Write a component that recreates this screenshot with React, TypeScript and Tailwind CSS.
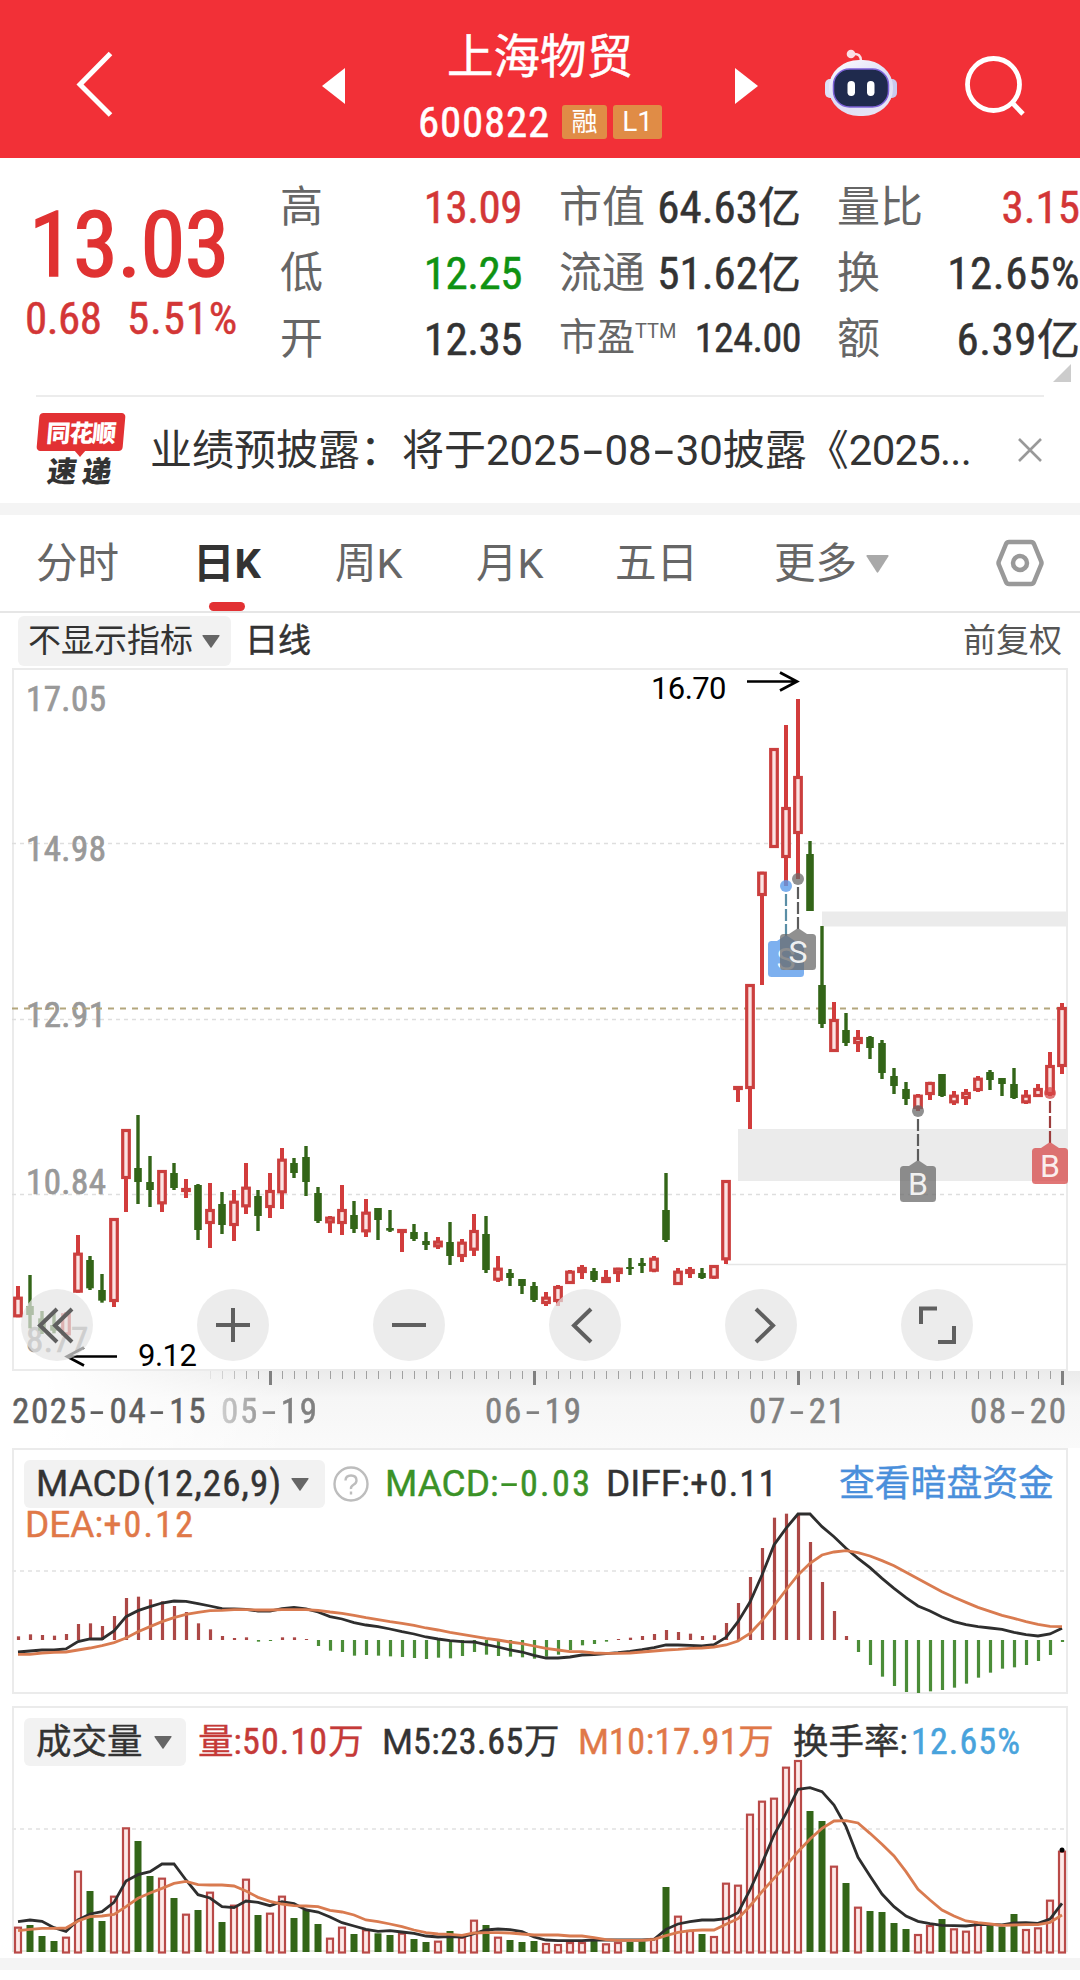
import type { ReactNode } from 'react'

type Leg = { base: number; bars: number[][] }

const STEP = 12
const x = (i: number) => 18 + i * STEP

// every bar: high, body top, body bottom, low, up(1)/down(0), in thirds of a pixel below base
const legs: Leg[] = [
  {
    base: 1080,
    bars: [
      [618, 650, 712, 712, 1], [585, 678, 705, 745, 0], [693, 715, 752, 762, 0], [700, 735, 752, 760, 0],
      [697, 700, 766, 775, 1], [465, 518, 638, 638, 1], [528, 540, 625, 630, 0], [582, 630, 662, 668, 0],
      [414, 414, 666, 681, 1], [147, 147, 297, 396, 1], [105, 264, 306, 372, 0], [228, 306, 330, 381, 0],
      [270, 270, 373, 396, 1], [249, 279, 324, 330, 0], [297, 324, 336, 354, 1], [312, 315, 450, 480, 0],
      [309, 387, 432, 504, 1], [336, 372, 435, 462, 0], [330, 362, 438, 483, 1], [249, 320, 382, 402, 1],
      [330, 348, 408, 453, 0], [279, 330, 384, 414, 1], [204, 236, 340, 387, 1], [234, 249, 279, 294, 0],
      [198, 231, 306, 348, 0], [321, 339, 423, 429, 0], [408, 410, 430, 459, 1], [315, 387, 432, 465, 1],
      [363, 405, 447, 459, 0], [357, 395, 457, 471, 1], [384, 384, 420, 480, 0], [390, 444, 452, 456, 0],
      [447, 447, 459, 516, 1], [432, 456, 477, 483, 0], [456, 483, 495, 510, 0], [471, 482, 502, 507, 1],
      [426, 486, 528, 555, 0], [477, 485, 531, 546, 1], [402, 450, 512, 528, 1], [408, 462, 570, 579, 0],
      [528, 563, 602, 606, 1], [567, 579, 594, 618, 0], [597, 597, 618, 642, 0], [606, 618, 660, 666, 0],
      [636, 650, 672, 678, 1], [615, 618, 666, 678, 1], [570, 572, 612, 612, 1], [555, 561, 579, 597, 1],
      [564, 573, 600, 606, 0], [570, 591, 609, 609, 1], [563, 563, 582, 606, 1], [534, 561, 567, 585, 0],
      [534, 549, 558, 579, 0], [528, 533, 575, 577, 1], [279, 390, 480, 486, 0], [564, 572, 615, 615, 1],
      [561, 567, 582, 594, 1], [564, 579, 594, 597, 0], [555, 555, 596, 597, 1], [300, 300, 541, 552, 1],
      [18, 18, 30, 66, 1], [-288, -288, 27, 147, 1],
    ],
  },
  {
    base: 660,
    bars: [
      [635, 635, 708, 975, 1], [264, 264, 564, 564, 1], [195, 441, 594, 678, 1],
      [117, 348, 522, 657, 1], [543, 582, 753, 753, 0], [798, 975, 1092, 1104, 0],
    ],
  },
  {
    base: 960,
    bars: [
      [126, 177, 276, 276, 1], [159, 210, 249, 258, 0], [210, 231, 252, 276, 1], [228, 231, 264, 297, 0],
      [240, 249, 339, 357, 0], [324, 348, 378, 402, 0], [366, 387, 417, 435, 0], [402, 404, 447, 453, 1],
      [365, 366, 405, 420, 1], [342, 342, 408, 411, 0], [393, 404, 430, 435, 1], [387, 396, 417, 435, 1],
      [348, 353, 393, 396, 1], [330, 336, 360, 390, 0], [354, 354, 372, 408, 0], [324, 372, 414, 417, 0],
      [390, 404, 430, 432, 1], [372, 384, 411, 411, 1], [276, 315, 405, 408, 1], [129, 141, 321, 342, 1],
    ],
  },
]

const candles = legs.flatMap(l =>
  l.bars.map(([h, t, b, lo, up]) => ({
    high: l.base + h / 3,
    top: l.base + t / 3,
    bottom: l.base + b / 3,
    low: l.base + lo / 3,
    up: up === 1,
  }))
)

const macd = [
  589, 583, 585, 587, 582, 552, 550, 558, 528, 474, 470, 478, 484, 498, 516, 550, 568, 588, 594, 592, 605, 603,
  592, 592, 597, 618, 632, 636, 647, 645, 647, 649, 651, 654, 657, 653, 655, 648, 636, 644, 648, 650, 652, 656,
  650, 644, 630, 616, 612, 605, 597, 593, 588, 582, 570, 576, 581, 588, 586, 549, 489, 411, 324, 233, 221, 225,
  306, 426, 513, 588, 636, 675, 710, 738, 756, 759, 754, 750, 743, 731, 713, 698, 686, 682, 675, 663, 645, 606,
]

const diff = [
  636, 633, 630, 630, 627, 605, 597, 597, 573, 530, 512, 500, 489, 483, 484, 491, 498, 506, 507, 508, 513, 513,
  506, 502, 507, 516, 530, 537, 548, 555, 560, 567, 575, 582, 591, 597, 602, 605, 606, 614, 621, 630, 636, 646,
  654, 654, 651, 645, 644, 641, 638, 634, 629, 623, 615, 615, 616, 618, 614, 592, 545, 486, 405, 315, 265, 222,
  222, 260, 290, 325, 355, 383, 415, 445, 473, 498, 513, 531, 545, 554, 560, 564, 568, 577, 584, 588, 582, 565,
]

const dea = [
  643, 643, 639, 637, 636, 630, 624, 617, 608, 594, 575, 560, 545, 533, 523, 517, 512, 511, 509, 509, 510, 510,
  509, 509, 509, 511, 516, 520, 526, 533, 539, 545, 550, 556, 564, 570, 577, 583, 589, 595, 600, 606, 611, 618,
  625, 630, 635, 635, 639, 640, 640, 639, 636, 633, 630, 628, 625, 624, 621, 615, 603, 580, 542, 497, 450, 405,
  370, 345, 336, 332, 338, 348, 362, 377, 397, 416, 436, 455, 472, 487, 502, 514, 526, 535, 545, 553, 559, 560,
]

// r = up, g = down, ten days a group
const volumeSides = [
  'rgggrrggrr', 'ggrgrgrgrr', 'grrgggrrgr', 'ggrggrgrrg', 'rgggrrrrgr', 'rggrgrrgrr', 'rrrrrrggrg', 'rggggrrgrr', 'rgggrrrr',
].join('')
const volume = [
  680, 675, 708, 723, 710, 512, 573, 663, 587, 382, 423, 528, 533, 594, 641, 630, 575, 666, 614, 536, 645, 638,
  587, 654, 630, 672, 713, 680, 702, 688, 700, 705, 698, 717, 726, 722, 693, 710, 659, 675, 710, 720, 726, 723,
  729, 732, 726, 726, 720, 730, 726, 726, 724, 714, 561, 647, 690, 702, 708, 548, 554, 341, 302, 293, 200, 180,
  333, 363, 497, 549, 620, 633, 636, 669, 687, 702, 675, 657, 685, 692, 668, 675, 680, 642, 687, 682, 599, 452,
]

const m5 = [
  665, 660, 664, 683, 694, 660, 642, 635, 607, 543, 524, 515, 492, 492, 540, 584, 594, 620, 623, 603, 607, 617,
  605, 611, 630, 636, 651, 668, 678, 688, 694, 692, 696, 700, 708, 711, 710, 711, 701, 690, 687, 689, 695, 711,
  720, 722, 722, 722, 720, 720, 720, 720, 720, 718, 688, 672, 665, 660, 660, 656, 638, 570, 490, 405, 340, 268,
  263, 275, 315, 380, 472, 528, 582, 620, 648, 664, 671, 676, 677, 678, 674, 673, 675, 669, 668, 670, 657, 610,
]

const m10 = [
  692, 688, 685, 685, 684, 663, 650, 648, 643, 620, 595, 579, 565, 550, 544, 554, 555, 555, 558, 573, 592, 604,
  612, 617, 618, 620, 631, 636, 645, 660, 665, 672, 680, 690, 698, 702, 703, 706, 699, 698, 698, 699, 702, 705,
  705, 705, 708, 708, 713, 719, 721, 721, 721, 718, 707, 697, 692, 690, 690, 673, 656, 618, 575, 535, 497, 455,
  417, 385, 363, 362, 369, 400, 433, 468, 515, 568, 600, 630, 648, 663, 668, 672, 676, 675, 674, 674, 667, 645,
]

const points = (ys: number[], base: number) => ys.map((y, i) => `${x(i)},${base + y / 3}`).join(' ')

const Num = ({ children, className = '' }: { children: ReactNode; className?: string }) => (
  <span
    className={`font-['Roboto_Condensed','Noto_Sans_CJK_SC',sans-serif] [-webkit-text-stroke:0.5px_currentColor] ${className}`}
  >
    {children}
  </span>
)

// hyphen stretched to the width of a digit
const Dash = ({ className = 'w-[22px]' }: { className?: string }) => (
  <span className={`inline-block text-center ${className}`}>
    <span className="inline-block scale-x-[1.7] [-webkit-text-stroke:0.2px]">-</span>
  </span>
)

const DateText = ({ value, className = '' }: { value: string; className?: string }) => (
  <Num className={`text-[35px] tracking-[1.6px] ${className}`}>
    {value.split('-').map((part, i) => (
      <span key={i}>
        {i > 0 && <Dash />}
        {part}
      </span>
    ))}
  </Num>
)

const Caret = ({ className = 'h-[13px] w-[18px] text-[#666]' }: { className?: string }) => (
  <svg viewBox="0 0 18 13" preserveAspectRatio="none" className={className} fill="currentColor">
    <path d="M1 0h16q1 0 .5 1L9.7 12.3q-.7 1-1.4 0L.5 1Q0 0 1 0z" />
  </svg>
)

function Header() {
  return (
    <header className="flex h-[158px] bg-[#f23037] text-white">
      <div className="flex w-[322px] items-center pl-[76px] pt-[9px]">
        <svg viewBox="0 0 37 66" className="h-[66px] w-[37px]" fill="none" stroke="currentColor" strokeWidth="5">
          <path d="M34.500 2.500L4 33.500L34.500 64" />
        </svg>
      </div>
      <div className="flex w-[23px] items-center pt-[14px]">
        <svg viewBox="0 0 23 36" className="h-[36px] w-[23px]" fill="currentColor">
          <path d="M23 0v36L0 18z" />
        </svg>
      </div>
      <div className="flex w-[390px] flex-col items-center">
        <div className="mt-[26px] h-[62px] text-[46.500px] leading-[62px] [-webkit-text-stroke:0.5px_currentColor]">上海物贸</div>
        <div className="mt-[11px] flex items-center">
          <Num className="mr-[12px] text-[43px] leading-[46px] tracking-[0.8px]">600822</Num>
          <span className="mr-[6px] flex h-[34px] w-[45px] items-center justify-center rounded-[3px] bg-[#e08c46] text-[26px] leading-none">
            融
          </span>
          <span className="flex h-[34px] w-[49px] items-center justify-center rounded-[3px] bg-[#e08c46] text-[28px] leading-none">
            L1
          </span>
        </div>
      </div>
      <div className="flex w-[90px] items-center pt-[14px]">
        <svg viewBox="0 0 23 36" className="h-[36px] w-[23px]" fill="currentColor">
          <path d="M0 0v36L23 18z" />
        </svg>
      </div>
      <div className="flex w-[140px] items-center pt-[8px]">
        <svg viewBox="0 0 72 68" className="h-[68px] w-[72px]">
          <defs>
            <linearGradient id="shell" x1="0" y1="0" x2="0.6" y2="1">
              <stop offset="0" stopColor="#ffffff" />
              <stop offset="0.6" stopColor="#dcdcf6" />
              <stop offset="1" stopColor="#e6e4f5" />
            </linearGradient>
          </defs>
          <path d="M28 5Q36 4 36 12" fill="none" stroke="#fbdfe6" strokeWidth="2.500" />
          <circle cx="26" cy="5" r="4.300" fill="#fbdfe6" />
          <rect x="0" y="30" width="12" height="19" rx="5" fill="#dfe0f6" />
          <rect x="60" y="30" width="12" height="19" rx="5" fill="#c9c9ee" />
          <rect x="4" y="11" width="64" height="56" rx="30" ry="27" fill="url(#shell)" />
          <rect x="8.500" y="20" width="55" height="38" rx="16" fill="#1f2a4d" stroke="#7d62d8" strokeWidth="1.500" />
          <rect x="22.500" y="32" width="7.500" height="15" rx="3.700" fill="#fff" />
          <rect x="42" y="32" width="7.500" height="15" rx="3.700" fill="#fff" />
        </svg>
      </div>
      <div className="flex items-center pt-[14px]">
        <svg viewBox="0 0 60 60" className="h-[60px] w-[60px]" fill="none" stroke="currentColor" strokeWidth="4.800">
          <circle cx="28.500" cy="28.500" r="26" />
          <path d="M47 46.500L58 58" />
        </svg>
      </div>
    </header>
  )
}

const Stat = ({ label, value, tone = 'text-[#333]' }: { label: ReactNode; value: ReactNode; tone?: string }) => (
  <div className="flex h-[66px] items-center justify-between whitespace-nowrap text-[43px] leading-[66px] text-[#666]">
    <span>{label}</span>
    <Num className={`pt-[2px] text-[45px] tracking-[-0.500px] ${tone}`}>{value}</Num>
  </div>
)

const Yi = () => <span className="text-[43px] tracking-normal">亿</span>

function Quote() {
  return (
    <section className="relative flex h-[237px] pt-[16px]">
      <div className="w-[280px] shrink-0 pl-[25px] text-[#e03232]">
        <Num className="mt-[16px] ml-[4px] block h-[110px] text-[91px] leading-[110px] tracking-[-0.800px] [-webkit-text-stroke:1.5px_currentColor]">
          13.03
        </Num>
        <div className="flex h-[38px] items-center text-[45px] leading-[38px] text-[#d33636]">
          <Num className="w-[102px] tracking-[-0.500px]">0.68</Num>
          <Num className="tracking-[0.800px]">5.51%</Num>
        </div>
      </div>
      <div className="w-[242px] shrink-0">
        <Stat label="高" value="13.09" tone="text-[#d33636]" />
        <Stat label="低" value="12.25" tone="text-[#0f9212]" />
        <Stat label="开" value="12.35" />
      </div>
      <div className="ml-[37px] w-[242px] shrink-0">
        <Stat label="市值" value={<span className="tracking-normal">64.63<Yi /></span>} />
        <Stat label="流通" value={<span className="tracking-normal">51.62<Yi /></span>} />
        <Stat
          label={<span className="text-[38px]">市盈<span className="relative -top-[12px] text-[20px]">TTM</span></span>}
          value={<span className="relative -top-[2px] text-[40px]">124.00</span>}
        />
      </div>
      <div className="ml-[36px] w-[243px] shrink-0">
        <Stat label="量比" value={<span className="tracking-normal">3.15</span>} tone="text-[#d33636]" />
        <Stat label="换" value={<span className="tracking-[0.600px]">12.65%</span>} />
        <Stat label="额" value={<span className="tracking-[0.500px]">6.39<Yi /></span>} />
      </div>
      <svg viewBox="0 0 18 18" className="absolute right-[9px] bottom-[13px] h-[18px] w-[18px]" fill="#ccc">
        <path d="M18 0v18H0z" />
      </svg>
    </section>
  )
}

function News() {
  return (
    <section className="mx-[36px] flex h-[108px] items-center border-t-2 border-[#ececec]">
      <div className="relative w-[90px] shrink-0 font-['Noto_Sans_CJK_SC',sans-serif] font-black">
        <div className="ml-[2px] flex h-[38px] w-[86px] -skew-x-[5deg] items-center justify-center rounded-[4px] bg-[#e23133] text-[24px] leading-none tracking-[-1px] text-white">
          同花顺
        </div>
        <svg viewBox="0 0 12 7" className="absolute top-[37px] left-[38px] h-[7px] w-[12px]" fill="#e23133">
          <path d="M0 0h12L6 7z" />
        </svg>
        <div className="flex h-[36px] -skew-x-[8deg] items-end gap-[6px] pb-[3px] pl-[12px] text-[29px] leading-[30px] text-[#333]">
          <span>速</span>
          <span>递</span>
        </div>
      </div>
      <div className="ml-[24px] w-[868px] pt-[2px] text-[42px] leading-[60px] whitespace-nowrap text-[#333]">
        业绩预披露：将于2025<Dash className="w-[24px]" />08<Dash className="w-[24px]" />30披露《<span className="tracking-[-0.800px]">2025...</span>
      </div>
      <svg viewBox="0 0 24 24" className="h-[24px] w-[24px] shrink-0" stroke="#999" strokeWidth="2.600">
        <path d="M1 1L23 23M23 1L1 23" />
      </svg>
    </section>
  )
}

const tabs = [
  { name: '分时', width: 'w-[157px]' },
  { name: '日K', width: 'w-[142px]', active: true },
  { name: '周K', width: 'w-[141px]' },
  { name: '月K', width: 'w-[139px]' },
  { name: '五日', width: 'w-[159px]' },
]

function Tabs() {
  return (
    <nav className="flex h-[98px] items-center border-b-2 border-[#e6e6e6] pl-[36px] text-[41.500px] leading-[60px] text-[#666]">
      {tabs.map(t => (
        <div key={t.name} className={`relative h-[60px] pt-px ${t.width}`}>
          <span className={t.active ? 'font-bold text-[#333]' : ''}>{t.name}</span>
          {t.active && <div className="absolute top-[69px] left-[16px] h-[9px] w-[36px] rounded-[5px] bg-[#e23133]" />}
        </div>
      ))}
      <div className="flex w-[222px] items-center pt-px">
        更多
        <Caret className="ml-[9px] h-[18px] w-[23px] text-[#a9a9a9]" />
      </div>
      <svg viewBox="0 0 48 48" className="h-[48px] w-[48px]" fill="none" stroke="#999" strokeWidth="4.500">
        <path d="M13 3h22q2 0 3 2l7 17q1 2 0 4l-7 17q-1 2-3 2H13q-2 0-3-2L3 26q-1-2 0-4L10 5q1-2 3-2z" strokeLinejoin="round" />
        <circle cx="24" cy="24" r="7" />
      </svg>
    </nav>
  )
}

const tools = [
  'M36 20L19 36.500l17 16.500M51 20L34 36.500l17 16.500',
  'M19 36h34M36 19v34',
  'M19 36h34',
  'M42 20L25 36.500l17 16.500',
  'M31 20l17 16.500L31 53',
  'M20 35V19.500h16M37 53h16V37',
]

function Toolbar() {
  return (
    <div className="absolute top-[621px] left-[9px] flex gap-[104px]">
      {tools.map(d => (
        <button key={d} className="h-[72px] w-[72px] rounded-full bg-[#e4e4e4]/70">
          <svg viewBox="0 0 72 72" fill="none" stroke="#5f5f5f" strokeWidth="4">
            <path d={d} />
          </svg>
        </button>
      ))}
    </div>
  )
}

type MarkProps = { cx: number; dot: number; box: number; text: string; fill: string; line: string }

const Mark = ({ cx, dot, box, text, fill, line }: MarkProps) => (
  <g>
    <circle cx={cx} cy={dot} r="6" fill={fill} />
    <path d={`M${cx} ${dot + 8}V${box - 5}`} stroke={line} strokeWidth="2.200" strokeDasharray="12 3" />
    <path d={`M${cx - 9} ${box}L${cx} ${box - 6}L${cx + 9} ${box}z`} fill={fill} />
    <rect x={cx - 18} y={box} width="36" height="36" rx="3.500" fill={fill} />
    <text x={cx} y={box + 29} fontSize="32" textAnchor="middle" fill="#fff" fillOpacity="0.9">
      {text}
    </text>
  </g>
)

function KChart() {
  const axis = [
    { y: 711, v: '17.05' },
    { y: 861, v: '14.98' },
    { y: 1027, v: '12.91' },
    { y: 1194, v: '10.84' },
    { y: 1352, v: '8.77' },
  ]
  return (
    <section className="relative mx-[12px] h-[703px]">
      <svg viewBox="12 668 1056 703" className="block h-[703px] w-[1056px]">
        <rect x="13" y="669" width="1054" height="701" fill="#fff" stroke="#ebebeb" strokeWidth="2" />
        <path d="M822 911.500h245v15H822zM738 1129h329v52H738z" fill="#ebebeb" />
        <path d="M726 1264.500h341" stroke="#e6e6e6" strokeWidth="1.500" />
        <path d="M12 843.500H1067M12 1019.500H1067M12 1194.500H1067" stroke="#dedede" strokeWidth="1.500" strokeDasharray="4 4" />
        <g className="font-['Roboto_Condensed',sans-serif]" fontSize="35" fill="#999" letterSpacing="0.400">
          {axis.map(a => (
            <text key={a.v} x="26" y={a.y} stroke="#999" strokeWidth="0.700">{a.v}</text>
          ))}
        </g>
        <path d="M12 1008.500H1067" stroke="#b3a67c" strokeWidth="1.800" strokeDasharray="6 6" />
        {candles.map((c, i) =>
          c.up ? (
            <g key={i}>
              <path
                d={`M${x(i)} ${c.high}V${c.top + 1}M${x(i)} ${c.bottom - 1}V${c.low}`}
                stroke="#d23c3c"
                strokeWidth="4"
              />
              <rect
                x={x(i) - 3.3}
                y={c.top + 1.5}
                width="6.600"
                height={Math.max(c.bottom - c.top - 3, 0.5)}
                fill="#fbe3e2"
                stroke="#cb3f3e"
                strokeWidth="3.200"
              />
            </g>
          ) : (
            <g key={i} fill="#336518">
              <rect x={x(i) - 1.7} y={c.high} width="3.400" height={c.low - c.high} />
              <rect x={x(i) - 3.8} y={c.top} width="7.600" height={c.bottom - c.top} />
            </g>
          )
        )}
        <g className="font-['Roboto',sans-serif]">
          <Mark cx={786} dot={886} box={941} text="S" fill="rgba(92,156,235,0.8)" line="#5a8ea6" />
          <Mark cx={798} dot={879} box={934} text="S" fill="rgba(105,105,105,0.74)" line="#5c5c5c" />
          <Mark cx={918} dot={1111} box={1166} text="B" fill="rgba(105,105,105,0.74)" line="#5c5c5c" />
          <Mark cx={1050} dot={1093} box={1148} text="B" fill="rgba(214,70,70,0.74)" line="#9c3d3d" />
        </g>
        <g className="font-['Roboto',sans-serif]" fontSize="31" fill="#000">
          <text x="651" y="699" letterSpacing="-0.600">16.70</text>
          <text x="138" y="1366" letterSpacing="-0.500">9.12</text>
        </g>
        <path
          d="M747 681.500H797M780 672.500L797 681.500L780 690.500M117 1356.500H67M84 1347.500L67 1356.500L84 1365.500"
          fill="none"
          stroke="#000"
          strokeWidth="2.700"
        />
      </svg>
      <Toolbar />
    </section>
  )
}

function TimeAxis() {
  return (
    <section className="relative h-[77px] bg-linear-to-b from-[#ebebeb] via-[#f6f6f6] via-35% to-[#fafafa]">
      <div className="absolute inset-y-0 left-0 w-[300px] bg-linear-to-r from-white from-15% to-transparent" />
      <svg viewBox="0 1371 1080 16" className="absolute top-0 left-0 h-[16px] w-[1080px]">
        {Array.from({ length: 72 }, (_, i) => (
          <path key={i} d={`M${210.5 + i * 12} 1370v9`} stroke="#a0a0a0" opacity={Math.min(1, (i + 1) / 5)} />
        ))}
        <path d="M270.500 1370v15M534.500 1370v15M798.500 1370v15M1062.500 1370v15" stroke="#808080" strokeWidth="3" />
      </svg>
      <div className="relative flex pt-[20px] pr-[12px] pl-[12px] leading-[42px] text-[#808080]">
        <DateText value="2025-04-15" className="w-[209px] text-[#606060]" />
        <DateText value="05-19" className="w-[264px] [mask-image:linear-gradient(to_right,rgba(0,0,0,0.35),#000_22%)]" />
        <DateText value="06-19" className="w-[264px]" />
        <DateText value="07-21" className="w-[221px]" />
        <DateText value="08-20" />
      </div>
    </section>
  )
}

const Selector = ({ children, className }: { children: ReactNode; className: string }) => (
  <div className={`flex h-[48px] shrink-0 items-center rounded-[6px] bg-[#f2f2f2] text-[#333] ${className}`}>
    {children}
    <Caret />
  </div>
)

function Macd() {
  return (
    <section className="relative mx-[12px] h-[247px] [-webkit-text-stroke:0.4px]">
      <svg viewBox="12 1448 1056 247" className="absolute inset-0 h-[247px] w-[1056px]">
        <rect x="13" y="1449" width="1054" height="244" fill="#fff" stroke="#ebebeb" strokeWidth="2" />
        <path d="M12 1571H1067" stroke="#e8e8e8" strokeWidth="1.800" strokeDasharray="4 4" />
        {macd.map((v, i) => (
          <path key={i} d={`M${x(i) + 0.5} 1640V${1440 + v / 3}`} stroke={v < 600 ? '#ac4846' : '#4b8d38'} strokeWidth="3.200" />
        ))}
        <polyline points={points(diff, 1440)} fill="none" stroke="#2e2e2e" strokeWidth="2.800" />
        <polyline points={points(dea, 1440)} fill="none" stroke="#d97b50" strokeWidth="2.800" />
      </svg>
      <div className="relative flex items-center pt-[12px] pl-[12px] text-[37px] leading-[48px] whitespace-nowrap">
        <Selector className="w-[301px] pl-[12px]">
          MACD<Num className="mr-[10px] ml-[2px] w-[138px] tracking-[1.100px]">(12,26,9)</Num>
        </Selector>
        <svg viewBox="0 0 36 36" className="mx-[8px] h-[36px] w-[36px] shrink-0" fill="none" stroke="#bdbdbd" strokeWidth="2.400">
          <circle cx="18" cy="18" r="16.500" />
          <path d="M12.500 14.500Q12.500 9.500 18 9.500T23.500 14.500Q23.500 17 20.500 18.700T18 23M18 25.500v3" />
        </svg>
        <div className="w-[229px] pl-[8px] text-[#3b9227]">
          MACD:<Dash className="w-[21px]" /><Num className="text-[36px] tracking-[2.400px]">0.03</Num>
        </div>
        <div className="w-[233px] text-[#333]">
          DIFF:<Num className="text-[36px] tracking-[1.400px]">+0.11</Num>
        </div>
        <a className="text-[35.800px] text-[#4a8fdb]">查看暗盘资金</a>
      </div>
      <div className="relative pl-[13px] text-[37px] leading-[34px] text-[#e07848]">
        DEA:<Num className="text-[36px] tracking-[2.200px]">+0.12</Num>
      </div>
    </section>
  )
}

function Volume() {
  return (
    <section className="relative mx-[12px] mt-[11px] h-[252px] [-webkit-text-stroke:0.4px]">
      <svg viewBox="12 1706 1056 252" className="absolute inset-0 h-[252px] w-[1056px]">
        <path d="M13 1952V1707H1067V1952" fill="none" stroke="#ebebeb" strokeWidth="2" />
        <path d="M12 1829H1067" stroke="#e8e8e8" strokeWidth="1.800" strokeDasharray="4 4" />
        <path d="M12 1951H1067" stroke="#e6ebe2" strokeWidth="2" />
        {volume.map((v, i) => {
          const top = 1700 + v / 3
          return volumeSides[i] === 'r' ? (
            <rect
              key={i}
              x={x(i) - 3}
              y={top + 1}
              width="6"
              height={1951.5 - top}
              fill="#fde9e8"
              stroke="#b94a48"
              strokeWidth="2.200"
            />
          ) : (
            <rect key={i} x={x(i) - 3.5} y={top} width="7" height={1952 - top} fill="#336518" />
          )
        })}
        <circle cx="1062" cy="1850" r="2.500" fill="#000" />
        <polyline points={points(m5, 1700)} fill="none" stroke="#2e2e2e" strokeWidth="2.800" />
        <polyline points={points(m10, 1700)} fill="none" stroke="#d97b50" strokeWidth="2.800" />
      </svg>
      <div className="relative flex items-center pt-[12px] pl-[12px] text-[35.500px] leading-[48px] whitespace-nowrap text-[#333]">
        <Selector className="w-[162px] gap-[11px] pl-[12px]">成交量</Selector>
        <div className="w-[196px] pl-[12px] text-[#c53a38]">
          量:<Num className="text-[36px] tracking-[1.100px]">50.10</Num>万
        </div>
        <div className="w-[196px]">
          M<Num className="text-[36px] tracking-[0.600px]">5:23.65</Num>万
        </div>
        <div className="w-[215px] text-[#e07848]">
          M<Num className="text-[36px] tracking-[0.600px]">10:17.91</Num>万
        </div>
        <div>
          换手率:<Num className="ml-[3px] text-[36px] tracking-[1.100px] text-[#48a3dc]">12.65%</Num>
        </div>
      </div>
    </section>
  )
}

export default function App() {
  return (
    <main className="h-[1980px] w-[1080px] overflow-hidden bg-white font-['Roboto','Noto_Sans_CJK_SC',sans-serif]">
      <Header />
      <Quote />
      <News />
      <div className="h-[12px] bg-[#f4f4f4]" />
      <Tabs />
      <section className="flex h-[55px] items-center justify-between px-[18px] pt-px text-[33px] leading-[50px] text-[#333]">
        <div className="flex items-center">
          <div className="mr-[14px] flex h-[50px] w-[213px] items-center gap-[9px] rounded-[6px] bg-[#f2f2f2] pl-[10px]">
            不显示指标
            <Caret />
          </div>
          <span className="[-webkit-text-stroke:0.5px_currentColor]">日线</span>
        </div>
        <span className="text-[#555]">前复权</span>
      </section>
      <KChart />
      <TimeAxis />
      <Macd />
      <Volume />
      <div className="h-[12px] bg-[#f4f4f4]" />
    </main>
  )
}
